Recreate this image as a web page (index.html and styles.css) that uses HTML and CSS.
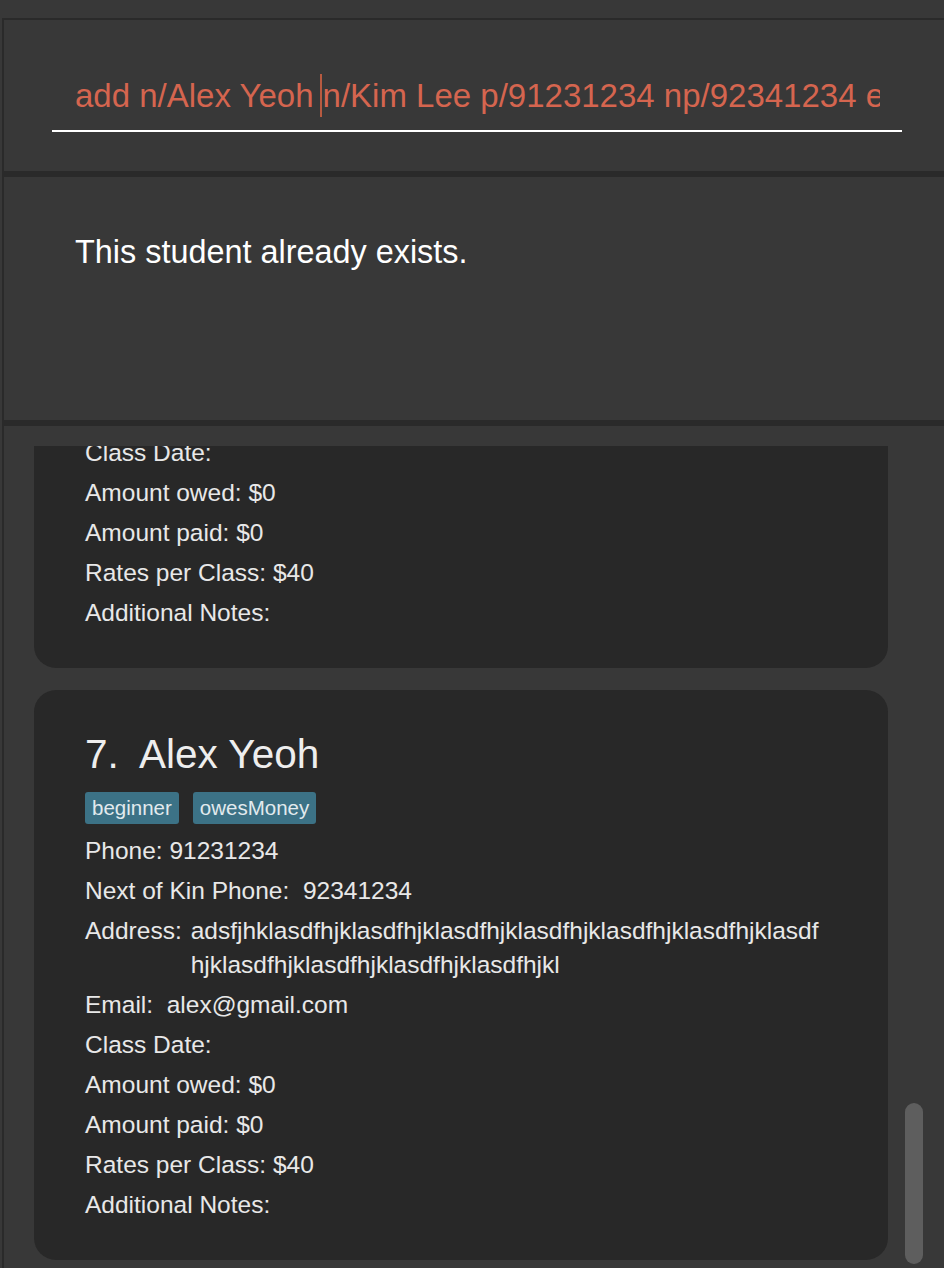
FILE: index.html
```html
<!DOCTYPE html>
<html lang="en">
<head>
<meta charset="utf-8">
<title>Tutor App</title>
<link rel="stylesheet" href="styles.css">
</head>
<body>
<div class="window">
  <div class="command-box">
    <div class="command-field"><div class="command-clip"><span class="cmd-text">add n/Alex Yeoh</span><span class="caret"></span><span class="cmd-text">n/Kim Lee p/91231234 np/92341234 e/alex@gmail.com a/adsfjhklasdf</span></div></div>
  </div>
  <div class="sep"></div>
  <div class="result">This student already exists.</div>
  <div class="sep"></div>
  <div class="list">
    <div class="viewport">
      <div class="card card-scrolled">
        <div class="rows">
          <div class="row">Class Date:</div>
          <div class="row">Amount owed: $0</div>
          <div class="row">Amount paid: $0</div>
          <div class="row">Rates per Class: $40</div>
          <div class="row">Additional Notes:</div>
        </div>
      </div>
      <div class="card">
        <div class="name">7.&nbsp; Alex Yeoh</div>
        <div class="tags">
          <span class="tag">beginner</span>
          <span class="tag">owesMoney</span>
        </div>
        <div class="rows">
          <div class="row">Phone: 91231234</div>
          <div class="row">Next of Kin Phone:&nbsp; 92341234</div>
          <div class="row row-split">
            <span class="label">Address:</span>
            <span class="value">adsfjhklasdfhjklasdfhjklasdfhjklasdfhjklasdfhjklasdfhjklasdf<br>hjklasdfhjklasdfhjklasdfhjklasdfhjkl</span>
          </div>
          <div class="row">Email:&nbsp; alex@gmail.com</div>
          <div class="row">Class Date:</div>
          <div class="row">Amount owed: $0</div>
          <div class="row">Amount paid: $0</div>
          <div class="row">Rates per Class: $40</div>
          <div class="row">Additional Notes:</div>
        </div>
      </div>
    </div>
    <div class="scrollbar"></div>
  </div>
</div>
</body>
</html>
```

FILE: styles.css
```css
html, body {
  margin: 0;
  padding: 0;
  height: 1268px;
  overflow: hidden;
  background: #383838;
  font-family: "Liberation Sans", Arial, sans-serif;
}

.window {
  margin: 18px 0 0 2px;
  border-top: 2px solid #2a2a2a;
  border-left: 2px solid #2a2a2a;
  height: 1248px;
  display: flex;
  flex-direction: column;
}

.command-box {
  height: 151px;
  box-sizing: border-box;
  padding: 54px 42px 0 48px;
}

.command-field {
  border-bottom: 2px solid #ffffff;
  padding: 0 22px 12px 23px;
}

.command-clip {
  height: 44px;
  line-height: 44px;
  font-size: 33px;
  white-space: nowrap;
  overflow: hidden;
  color: #d5654f;
}

.caret {
  display: inline-block;
  width: 2px;
  height: 43px;
  margin: 0 1px 0 6px;
  vertical-align: top;
  background: #b75a40;
}

.sep {
  height: 6px;
  background: #2a2a2a;
}

.result {
  height: 243px;
  box-sizing: border-box;
  padding: 55px 0 0 71px;
  font-size: 32.4px;
  line-height: 40px;
  color: #ffffff;
}

.list {
  position: relative;
  flex: 1;
  min-height: 0;
  padding: 20px 56px 0 30px;
}

.viewport {
  height: 100%;
  overflow: hidden;
  display: flex;
  flex-direction: column;
  gap: 22px;
}

.card {
  flex: none;
  background: #282828;
  border-radius: 22px;
  padding: 39px 20px 38px 51px;
  color: #e8e8e8;
}

.card-scrolled {
  margin-top: -49px;
}

.name {
  font-size: 40.5px;
  line-height: 50px;
  color: #eeeeee;
  margin-bottom: 13px;
}

.tags {
  display: flex;
  gap: 14px;
  margin-bottom: 10px;
}

.tag {
  background: #3c7286;
  color: #e2eaee;
  font-size: 20.5px;
  line-height: 32px;
  height: 32px;
  padding: 0 7px;
  border-radius: 3px;
}

.rows {
  display: flex;
  flex-direction: column;
  gap: 6px;
}

.row {
  font-size: 24.5px;
  line-height: 34px;
  white-space: nowrap;
}

.row-split {
  display: flex;
  gap: 9px;
}

.scrollbar {
  position: absolute;
  left: 901px;
  top: 677px;
  width: 18px;
  height: 161px;
  border-radius: 9px;
  background: #5e5e5e;
}
```
